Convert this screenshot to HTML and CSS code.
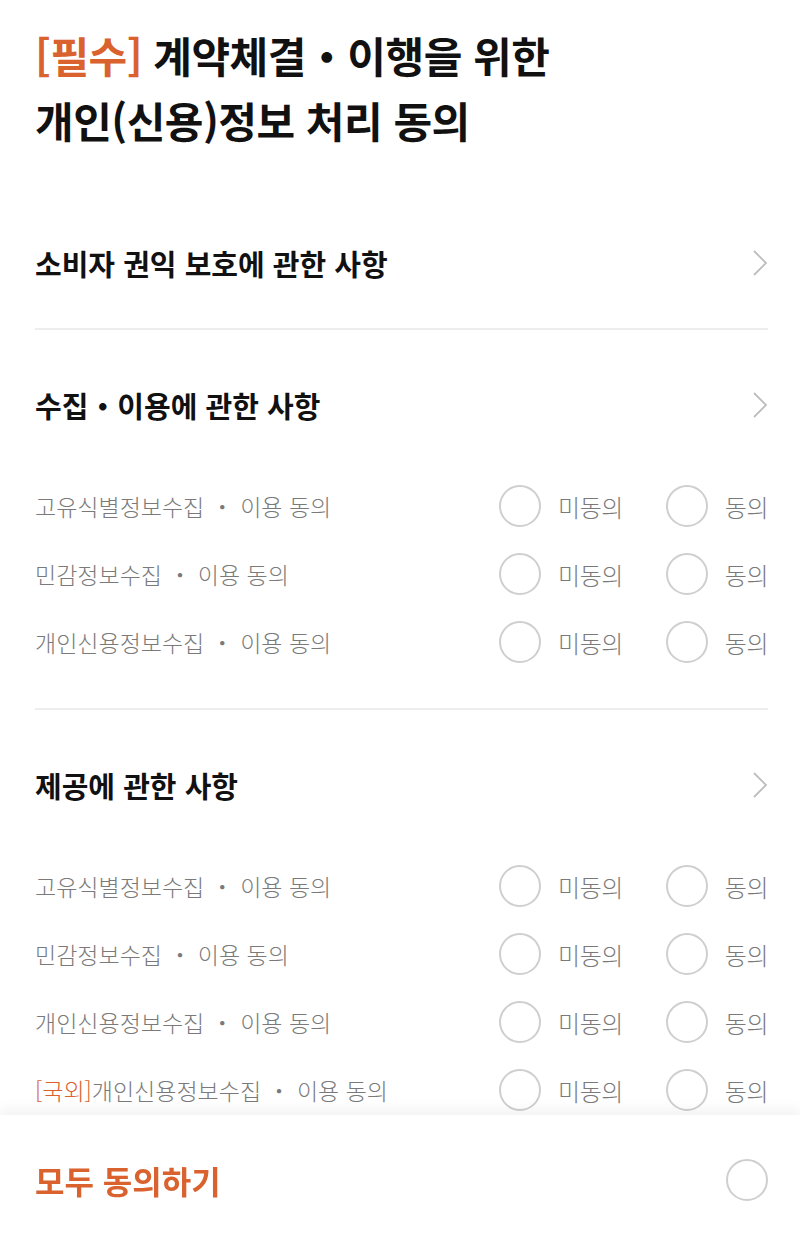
FILE: index.html
```html
<!DOCTYPE html>
<html lang="ko">
<head>
    <meta charset="UTF-8">
    <meta name="viewport" content="width=device-width, initial-scale=1.0">
    <title>개인(신용)정보 처리 동의</title>
    <link rel="stylesheet" href="styles.css">
</head>
<body>

    <div class="page">
        <h1 class="title"><span class="accent">[필수]</span> 계약체결・이행을 위한<br>개인(신용)정보 처리 동의</h1>

        <!-- 소비자 권익 -->
        <div class="section">
            <div class="section-head">
                <span>소비자 권익 보호에 관한 사항</span>
                <svg class="chevron" width="16" height="28" viewBox="0 0 16 28"><path d="M2 2 L14 14 L2 26" fill="none" stroke="#bdbdbd" stroke-width="1.8"/></svg>
            </div>
        </div>

        <!-- 수집・이용 -->
        <div class="section">
            <div class="section-head">
                <span>수집・이용에 관한 사항</span>
                <svg class="chevron" width="16" height="28" viewBox="0 0 16 28"><path d="M2 2 L14 14 L2 26" fill="none" stroke="#bdbdbd" stroke-width="1.8"/></svg>
            </div>
            <div class="rows">
                <div class="row">
                    <span class="label">고유식별정보수집 ・ 이용 동의</span>
                    <div class="choices">
                        <span class="radio"></span><span class="choice">미동의</span>
                        <span class="radio"></span><span class="choice">동의</span>
                    </div>
                </div>
                <div class="row">
                    <span class="label">민감정보수집 ・ 이용 동의</span>
                    <div class="choices">
                        <span class="radio"></span><span class="choice">미동의</span>
                        <span class="radio"></span><span class="choice">동의</span>
                    </div>
                </div>
                <div class="row">
                    <span class="label">개인신용정보수집 ・ 이용 동의</span>
                    <div class="choices">
                        <span class="radio"></span><span class="choice">미동의</span>
                        <span class="radio"></span><span class="choice">동의</span>
                    </div>
                </div>
            </div>
        </div>

        <!-- 제공 -->
        <div class="section last">
            <div class="section-head">
                <span>제공에 관한 사항</span>
                <svg class="chevron" width="16" height="28" viewBox="0 0 16 28"><path d="M2 2 L14 14 L2 26" fill="none" stroke="#bdbdbd" stroke-width="1.8"/></svg>
            </div>
            <div class="rows">
                <div class="row">
                    <span class="label">고유식별정보수집 ・ 이용 동의</span>
                    <div class="choices">
                        <span class="radio"></span><span class="choice">미동의</span>
                        <span class="radio"></span><span class="choice">동의</span>
                    </div>
                </div>
                <div class="row">
                    <span class="label">민감정보수집 ・ 이용 동의</span>
                    <div class="choices">
                        <span class="radio"></span><span class="choice">미동의</span>
                        <span class="radio"></span><span class="choice">동의</span>
                    </div>
                </div>
                <div class="row">
                    <span class="label">개인신용정보수집 ・ 이용 동의</span>
                    <div class="choices">
                        <span class="radio"></span><span class="choice">미동의</span>
                        <span class="radio"></span><span class="choice">동의</span>
                    </div>
                </div>
                <div class="row">
                    <span class="label"><span class="accent">[국외]</span>개인신용정보수집 ・ 이용 동의</span>
                    <div class="choices">
                        <span class="radio"></span><span class="choice">미동의</span>
                        <span class="radio"></span><span class="choice">동의</span>
                    </div>
                </div>
            </div>
        </div>
    </div>

    <!-- 하단 고정 바 -->
    <div class="bottom-bar">
        <span class="all-agree">모두 동의하기</span>
        <span class="radio"></span>
    </div>

</body>
</html>
```

FILE: styles.css
```css
body {
    font-family: "Noto Sans CJK KR", "Noto Sans", sans-serif;
    margin: 0;
    padding: 0;
    background-color: #fff;
    color: #111;
}
.page {
    padding: 22px 32px 140px 35px;
}
.accent {
    color: #d9622e;
}
.title {
    margin: 0 0 36px 0;
    font-size: 42px;
    line-height: 65px;
    font-weight: 700;
    letter-spacing: -0.5px;
}
.section {
    padding: 40px 0 30px 0;
    border-bottom: 2px solid #ededed;
}
.section.last {
    border-bottom: none;
}
.section-head {
    display: flex;
    justify-content: space-between;
    align-items: center;
    height: 70px;
    font-size: 29px;
    font-weight: 700;
}
.rows {
    padding: 32px 0 2px 0;
}
.row {
    display: flex;
    justify-content: space-between;
    align-items: center;
    height: 68px;
}
.label {
    font-size: 23px;
    font-weight: 300;
    color: #7a7a7a;
}
.choices {
    display: flex;
    align-items: center;
}
.radio {
    display: block;
    width: 38px;
    height: 38px;
    border: 2px solid #cfcfcf;
    border-radius: 50%;
}
.choice {
    font-size: 24px;
    font-weight: 300;
    color: #7a7a7a;
    margin-left: 17px;
    letter-spacing: -0.5px;
}
.choice:nth-child(2) {
    margin-right: 43px;
}
.bottom-bar {
    position: fixed;
    left: 0;
    right: 0;
    bottom: 0;
    height: 122px;
    box-sizing: border-box;
    padding: 8px 32px 0 35px;
    display: flex;
    justify-content: space-between;
    align-items: center;
    background-color: #fff;
    box-shadow: 0 -6px 12px rgba(0, 0, 0, 0.05);
}
.all-agree {
    font-size: 32px;
    font-weight: 700;
    color: #d9622e;
}
```
